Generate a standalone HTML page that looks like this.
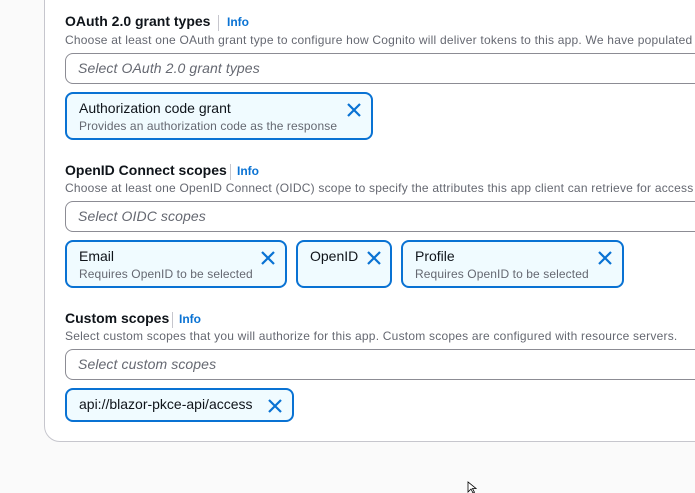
<!DOCTYPE html>
<html><head><style>
*{box-sizing:border-box;margin:0;padding:0}
body{width:695px;height:491px;overflow:hidden;background:#fafafa;font-family:"Liberation Sans",sans-serif;position:relative}
.panel{position:absolute;left:44px;top:-20px;width:700px;height:462px;background:#fff;border:1px solid #c6c6cd;border-radius:16px}
.abs{position:absolute;white-space:nowrap}
.t{font-weight:bold;font-size:14px;color:#0f141a}
.info{font-weight:bold;font-size:12px;color:#0972d3}
.sep{width:1px;height:16px;background:#c6c6cd}
.d{font-size:12px;color:#656871;letter-spacing:0.22px}
.in{position:absolute;left:65px;width:660px;height:31px;border:1px solid #8c8c94;border-radius:8px;font-style:italic;font-size:14px;color:#656871;padding:6px 12px;letter-spacing:0.1px}
.tok{position:absolute;border:2px solid #0972d3;background:#f0fbff;border-radius:8px}
.tok .m{position:absolute;left:12px;top:6px;font-size:14px;color:#0f141a;white-space:nowrap}
.tok .s{position:absolute;left:12px;top:25px;font-size:12px;color:#656871;white-space:nowrap;letter-spacing:0.1px}
.tok svg{position:absolute;top:8px}
</style></head><body>
<div class="panel"></div>

<div class="abs t" style="left:65px;top:13px">OAuth 2.0 grant types</div>
<div class="abs sep" style="left:218px;top:15px"></div>
<div class="abs info" style="left:227px;top:15px">Info</div>
<div class="abs d" style="left:65px;top:33px">Choose at least one OAuth grant type to configure how Cognito will deliver tokens to this app. We have populated</div>
<div class="in" style="top:53px">Select OAuth 2.0 grant types</div>
<div class="tok" style="left:65px;top:92px;width:308px;height:48px"><span class="m">Authorization code grant</span><span class="s">Provides an authorization code as the response</span>
<svg style="left:279px" width="16" height="16" viewBox="0 0 16 16"><path d="M2 2L14 14M14 2L2 14" stroke="#0972d3" stroke-width="2.2"/></svg></div>

<div class="abs t" style="left:65px;top:162px">OpenID Connect scopes</div>
<div class="abs sep" style="left:230px;top:164px"></div>
<div class="abs info" style="left:237px;top:164px">Info</div>
<div class="abs d" style="left:65px;top:181px">Choose at least one OpenID Connect (OIDC) scope to specify the attributes this app client can retrieve for access to</div>
<div class="in" style="top:201px">Select OIDC scopes</div>
<div class="tok" style="left:65px;top:240px;width:222px;height:48px"><span class="m">Email</span><span class="s">Requires OpenID to be selected</span>
<svg style="left:193px" width="16" height="16" viewBox="0 0 16 16"><path d="M2 2L14 14M14 2L2 14" stroke="#0972d3" stroke-width="2.2"/></svg></div>
<div class="tok" style="left:296px;top:240px;width:96px;height:48px"><span class="m">OpenID</span>
<svg style="left:68px" width="16" height="16" viewBox="0 0 16 16"><path d="M2 2L14 14M14 2L2 14" stroke="#0972d3" stroke-width="2.2"/></svg></div>
<div class="tok" style="left:401px;top:240px;width:223px;height:48px"><span class="m">Profile</span><span class="s">Requires OpenID to be selected</span>
<svg style="left:194px" width="16" height="16" viewBox="0 0 16 16"><path d="M2 2L14 14M14 2L2 14" stroke="#0972d3" stroke-width="2.2"/></svg></div>

<div class="abs t" style="left:65px;top:310px">Custom scopes</div>
<div class="abs sep" style="left:172px;top:312px"></div>
<div class="abs info" style="left:179px;top:312px">Info</div>
<div class="abs d" style="left:65px;top:329px">Select custom scopes that you will authorize for this app. Custom scopes are configured with resource servers.</div>
<div class="in" style="top:349px">Select custom scopes</div>
<div class="tok" style="left:65px;top:388px;width:229px;height:34px"><span class="m">api://blazor-pkce-api/access</span>
<svg style="left:200px" width="16" height="16" viewBox="0 0 16 16"><path d="M2 2L14 14M14 2L2 14" stroke="#0972d3" stroke-width="2.2"/></svg></div>

<svg style="position:absolute;left:467px;top:481px" width="10" height="12" viewBox="0 0 10 12"><path d="M1 1V11L4 8L6 12L7.5 11.3L5.5 7.5H9Z" fill="#fff" stroke="#000" stroke-width="0.8"/></svg>
</body></html>
